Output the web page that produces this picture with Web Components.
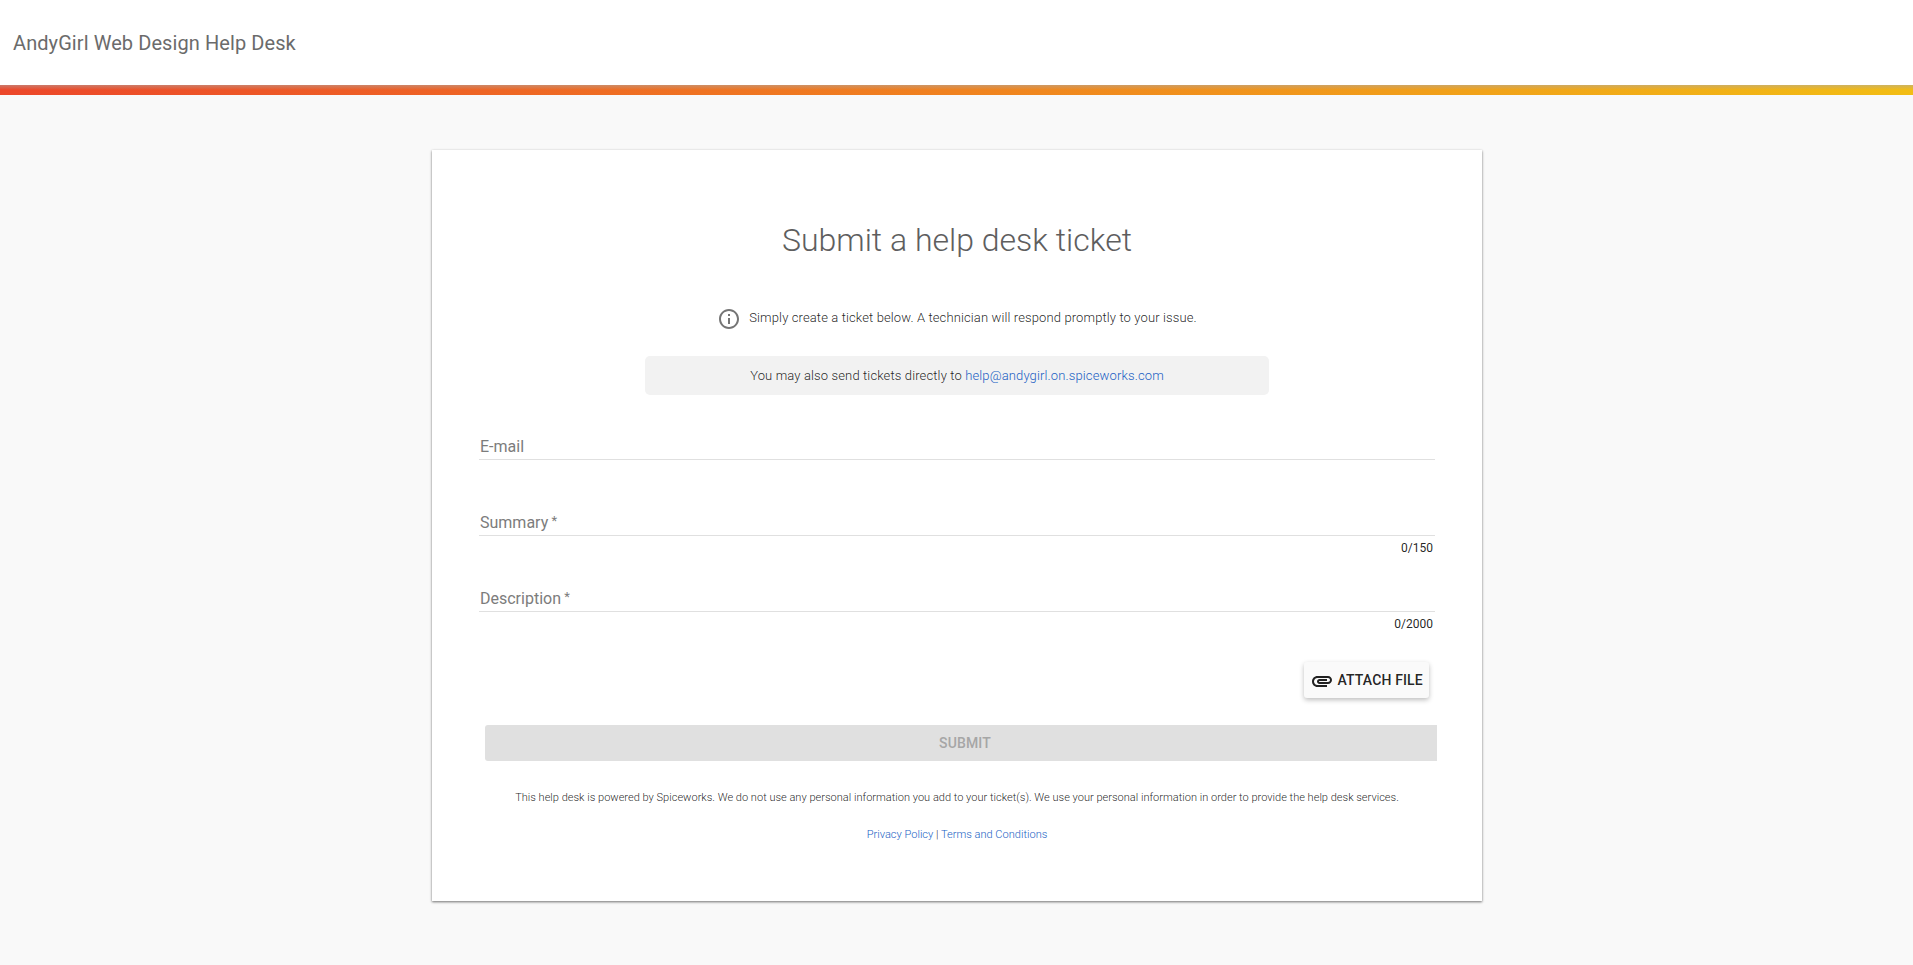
<!DOCTYPE html>
<html lang="en">
<head>
<meta charset="utf-8">
<title>AndyGirl Web Design Help Desk</title>
<style>
  html, body { margin: 0; height: 100%; }
  body { background: #f9f9f9; font-family: Roboto, "Liberation Sans", sans-serif; color: rgba(0,0,0,.87); overflow: hidden; }
</style>
</head>
<body>
<help-portal></help-portal>
<script>
  const define = (name, html) => {
    const template = document.createElement('template');
    template.innerHTML = html;
    customElements.define(name, class extends HTMLElement {
      constructor() {
        super();
        this.attachShadow({ mode: 'open' }).append(template.content.cloneNode(true));
      }
    });
  };

  define('portal-header', `
    <style>
      :host { display: block; }
      header { display: flex; align-items: center; height: 85px; padding-left: 13px; background: #fff; color: #6b6b6b;
        font-size: 20px; letter-spacing: .08px; }
      h1 { font: inherit; margin: 0; }
      .stripe { height: 10px; background: linear-gradient(rgba(170,170,170,.5), rgba(170,170,170,0) 5px), linear-gradient(90deg, #ec472a, #f0821f 50%, #f2bd14); }
    </style>
    <header><h1><slot></slot></h1></header>
    <div class="stripe"></div>`);

  define('portal-card', `
    <style>
      :host { display: block; box-sizing: border-box; width: 1050px; margin: 55px auto 0; padding: 70px 46.5px 58px 47.5px; background: #fff;
        box-shadow: 0 1px 3px rgba(0,0,0,.24), 0 1px 2px rgba(0,0,0,.36); }
    </style>
    <slot></slot>`);

  define('portal-title', `
    <style>
      :host { display: block; }
      h2 { margin: 0; font-size: 32px; line-height: 40px; font-weight: 300; text-align: center; color: #5e5e5e; }
    </style>
    <h2><slot></slot></h2>`);

  define('info-line', `
    <style>
      :host { display: flex; justify-content: center; gap: 8px; height: 24px; margin-top: 47px; font-size: 13px; font-weight: 300;
        letter-spacing: .12px; line-height: 21px; }
      svg { width: 24px; height: 24px; fill: #757575; }
    </style>
    <svg viewBox="0 0 24 24"><path d="M11 17h2v-6h-2v6zm1-15C6.480 2 2 6.480 2 12s4.480 10 10 10 10-4.480 10-10S17.520 2 12 2zm0 18c-4.410 0-8-3.590-8-8s3.590-8 8-8 8 3.590 8 8-3.590 8-8 8zM11 9h2V7h-2v2z"/></svg>
    <span><slot></slot></span>`);

  define('mail-notice', `
    <style>
      :host { display: block; box-sizing: border-box; width: 624px; margin: 25px auto 40px; background: #f2f2f2; border-radius: 5px;
        font-size: 13px; font-weight: 300; letter-spacing: .13px; line-height: 39px; text-align: center; }
      ::slotted(a) { color: #1a5fc4; text-decoration: none; }
    </style>
    <slot></slot>`);

  customElements.define('text-field', class extends HTMLElement {
    connectedCallback() {
      const max = this.getAttribute('max');
      const required = this.hasAttribute('required');
      this.attachShadow({ mode: 'open' }).innerHTML = `
        <style>
          :host { display: block; height: 76px; }
          label { display: block; height: 24px; padding-left: 1px; border-bottom: 1px solid #e0e0e0; font-size: 16px; line-height: 24px; color: #7c7c7c; }
          .star { font-size: 13px; line-height: 19px; vertical-align: top; white-space: pre; }
          .count { padding-right: 2px; text-align: right; font-size: 12px; line-height: 24px; }
        </style>
        <label><slot></slot>${required ? '<span class="star"> *</span>' : ''}</label>
        ${max ? `<div class="count">0/${max}</div>` : ''}`;
    }
  });

  define('attach-button', `
    <style>
      :host { display: flex; justify-content: flex-end; margin: -1px 6px 0 0; }
      button { display: flex; align-items: center; box-sizing: border-box; width: 125px; height: 36px; padding: 0 0 0 6px; border: 0; border-radius: 3px;
        background: #fafafa; color: rgba(0,0,0,.87); font: 500 14px/36px Roboto, sans-serif; letter-spacing: .14px; white-space: nowrap;
        box-shadow: 0 2px 5px rgba(0,0,0,.26); }
      svg { width: 24px; height: 24px; margin: 1px 3.5px 0 0; fill: #212121; flex: none; }
    </style>
    <button type="button">
      <svg viewBox="0 0 24 24"><path d="M2 12.500C2 9.460 4.460 7 7.500 7H18c2.210 0 4 1.790 4 4s-1.790 4-4 4H9.500C8.120 15 7 13.880 7 12.500S8.120 10 9.500 10H17v2H9.410c-.55 0-.55 1 0 1H18c1.100 0 2-.9 2-2s-.9-2-2-2H7.500C5.570 9 4 10.570 4 12.500S5.570 16 7.500 16H17v2H7.500C4.460 18 2 15.540 2 12.500z"/></svg>
      <span><slot></slot></span>
    </button>`);

  define('submit-button', `
    <style>
      :host { display: block; margin: 27px -2px 28px 6px; overflow: hidden; }
      button { display: block; width: calc(100% + 8px); height: 36px; padding: 0; border: 0; border-radius: 3px; background: #e0e0e0; color: #a6a6a6;
        font: 500 14px/36px Roboto, sans-serif; letter-spacing: .14px; }
    </style>
    <button type="button" disabled><slot></slot></button>`);

  define('legal-note', `
    <style>
      :host { display: block; text-align: center; font-size: 11.05px; font-weight: 300; line-height: 17px; white-space: nowrap; }
      p { margin: 0 0 20px; }
      ::slotted(a) { color: #1a5fc4; text-decoration: none; }
    </style>
    <p><slot name="note"></slot></p>
    <div><slot></slot></div>`);

  define('help-portal', `
    <style>:host { display: block; } a { color: #1a5fc4; text-decoration: none; }</style>
    <portal-header>AndyGirl Web Design Help Desk</portal-header>
    <portal-card>
      <portal-title>Submit a help desk ticket</portal-title>
      <info-line>Simply create a ticket below. A technician will respond promptly to your issue.</info-line>
      <mail-notice>You may also send tickets directly to <a href="#">help@andygirl.on.spiceworks.com</a></mail-notice>
      <text-field>E-mail</text-field>
      <text-field required max="150">Summary</text-field>
      <text-field required max="2000">Description</text-field>
      <attach-button>ATTACH FILE</attach-button>
      <submit-button>SUBMIT</submit-button>
      <legal-note><span slot="note">This help desk is powered by Spiceworks. We do not use any personal information you add to your ticket(s). We use your personal information in order to provide the help desk services.</span><a href="#">Privacy Policy</a> | <a href="#">Terms and Conditions</a></legal-note>
    </portal-card>`);
</script>
</body>
</html>
